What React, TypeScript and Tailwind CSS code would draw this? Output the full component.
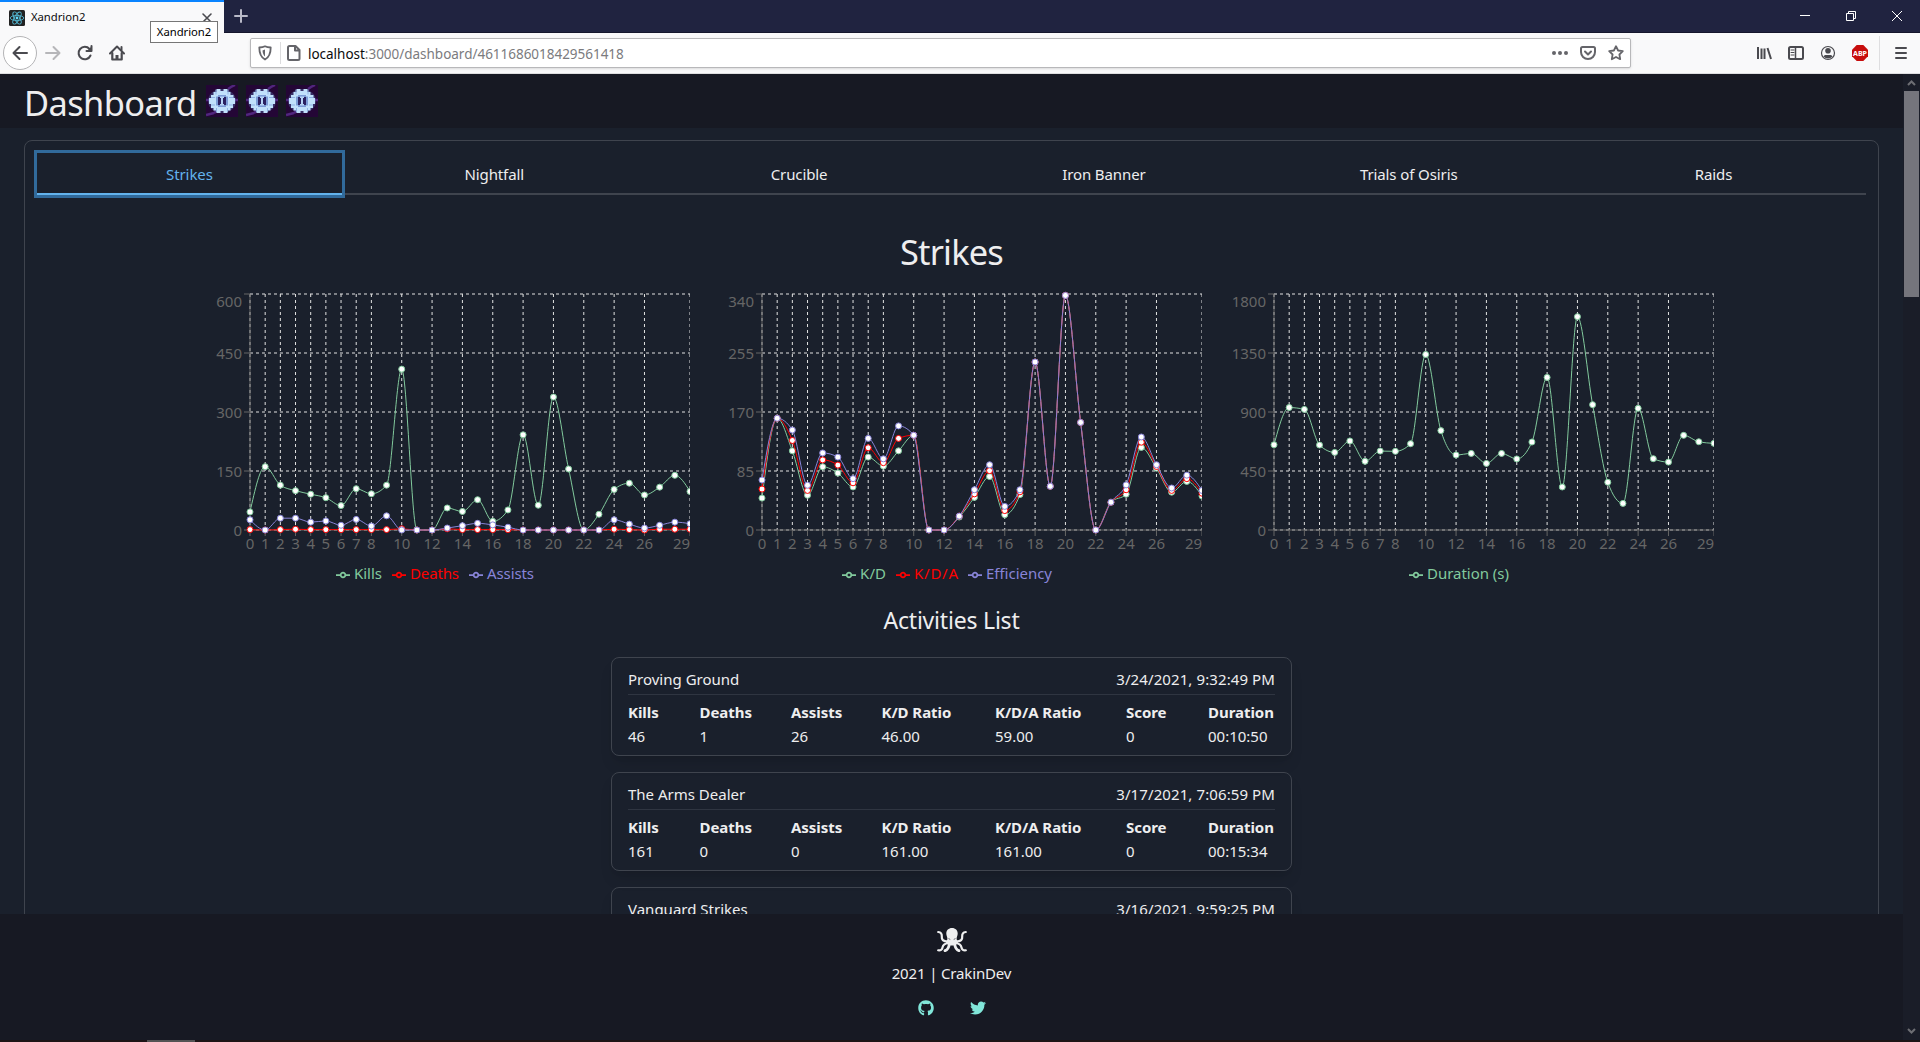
import React from 'react';
import { FaGithub, FaTwitter } from 'react-icons/fa';

type Series = { name: string; color: string; values: number[] };
type ChartData = { max: number; series: Series[]; legendWidths: number[] };

const GREEN = '#82ca9d';
const RED = '#ff0000';
const PURPLE = '#8884d8';

const charts: ChartData[] = [
  {
    max: 600,
    legendWidths: [28, 49, 47],
    series: [
      { name: 'Kills', color: GREEN, values: [46, 161, 114, 100, 91, 82, 62, 105, 92, 114, 409, 0, 0, 56, 47, 77, 22, 51, 242, 63, 338, 155, 0, 40, 103, 119, 89, 109, 139, 98] },
      { name: 'Deaths', color: RED, values: [1, 0, 1, 2, 1, 1, 1, 1, 1, 1, 3, 0, 0, 3, 1, 1, 1, 1, 0, 0, 0, 0, 0, 0, 2, 1, 0, 2, 2, 2] },
      { name: 'Assists', color: PURPLE, values: [26, 0, 30, 30, 20, 23, 12, 27, 10, 36, 0, 0, 0, 5, 11, 17, 13, 7, 0, 0, 0, 0, 0, 0, 26, 15, 5, 12, 20, 16] },
    ],
  },
  {
    max: 340,
    legendWidths: [26, 44, 66],
    series: [
      { name: 'K/D', color: GREEN, values: [46, 161, 114, 50, 91, 82, 62, 105, 92, 114, 136.5, 0, 0, 18.7, 47, 77, 22, 51, 242, 63, 338, 155, 0, 40, 51.5, 119, 89, 54.5, 70, 49] },
      { name: 'K/D/A', color: RED, values: [59, 161, 129, 57, 101, 93.5, 68, 118.5, 97, 132, 136.5, 0, 0, 20, 52, 85.5, 28, 55, 242, 63, 338, 155, 0, 40, 58, 126.5, 91.5, 57, 74, 53] },
      { name: 'Efficiency', color: PURPLE, values: [72, 161, 144, 64.5, 111, 105, 74, 132, 102.5, 150, 136.5, 0, 0, 20, 58, 94, 34, 58, 242, 63, 338, 155, 0, 40, 65, 134, 94, 60.5, 79, 57] },
    ],
  },
  {
    max: 1800,
    legendWidths: [82],
    series: [
      { name: 'Duration (s)', color: GREEN, values: [650, 934, 920, 648, 592, 679, 524, 602, 600, 658, 1339, 758, 572, 584, 508, 584, 542, 671, 1164, 328, 1627, 956, 364, 203, 928, 544, 518, 722, 673, 661] },
    ],
  },
];

const X_TICKS = [0, 1, 2, 3, 4, 5, 6, 7, 8, 10, 12, 14, 16, 18, 20, 22, 24, 26, 29];
const LEFT = 60;
const TOP = 5;
const PLOT_W = 440;
const PLOT_H = 236;

const xAt = (i: number) => LEFT + (i * PLOT_W) / 29;

/* Monotone cubic interpolation through the points. */
function monotonePath(pts: [number, number][]): string {
  const n = pts.length;
  const h: number[] = [];
  const s: number[] = [];
  for (let i = 0; i < n - 1; i++) {
    h.push(pts[i + 1][0] - pts[i][0]);
    s.push((pts[i + 1][1] - pts[i][1]) / h[i]);
  }
  const t: number[] = new Array(n).fill(0);
  for (let i = 1; i < n - 1; i++) {
    const p = (s[i - 1] * h[i] + s[i] * h[i - 1]) / (h[i - 1] + h[i]);
    t[i] = (Math.sign(s[i - 1]) + Math.sign(s[i])) * Math.min(Math.abs(s[i - 1]), Math.abs(s[i]), 0.5 * Math.abs(p)) || 0;
  }
  t[0] = (3 * s[0] - t[1]) / 2;
  t[n - 1] = (3 * s[n - 2] - t[n - 2]) / 2;
  let d = `M${pts[0][0]},${pts[0][1]}`;
  for (let i = 0; i < n - 1; i++) {
    const dx = h[i] / 3;
    d += `C${pts[i][0] + dx},${pts[i][1] + dx * t[i]},${pts[i + 1][0] - dx},${pts[i + 1][1] - dx * t[i + 1]},${pts[i + 1][0]},${pts[i + 1][1]}`;
  }
  return d;
}

function Chart({ data }: { data: ChartData }) {
  const yAt = (v: number) => TOP + PLOT_H * (1 - v / data.max);
  const yTicks = [0, 1, 2, 3, 4].map((k) => (data.max * k) / 4);
  return (
    <div className="w-[500px]">
      <svg width="500" height="271" className="block overflow-hidden text-[15px]">
        <g stroke="#e2e2e2" strokeDasharray="3 3">
          {yTicks.map((v) => (
            <line key={v} x1={LEFT} x2={LEFT + PLOT_W} y1={yAt(v)} y2={yAt(v)} />
          ))}
          {X_TICKS.map((i) => (
            <line key={i} x1={xAt(i)} x2={xAt(i)} y1={TOP} y2={TOP + PLOT_H} />
          ))}
        </g>
        <g stroke="#666">
          <line x1={LEFT} x2={LEFT + PLOT_W} y1={TOP + PLOT_H} y2={TOP + PLOT_H} />
          <line x1={LEFT} x2={LEFT} y1={TOP} y2={TOP + PLOT_H} />
          {yTicks.map((v) => (
            <line key={v} x1={LEFT - 6} x2={LEFT} y1={yAt(v)} y2={yAt(v)} />
          ))}
          {X_TICKS.map((i) => (
            <line key={i} x1={xAt(i)} x2={xAt(i)} y1={TOP + PLOT_H} y2={TOP + PLOT_H + 6} />
          ))}
        </g>
        <g fill="#666" textAnchor="end">
          {yTicks.map((v) => (
            <text key={v} x={LEFT - 8} y={(v === data.max ? 12.3 : yAt(v)) + 5.5}>
              {v}
            </text>
          ))}
        </g>
        <g fill="#666" textAnchor="middle">
          {X_TICKS.map((i) => (
            <text key={i} x={i === 29 ? 491.5 : xAt(i)} y={260}>
              {i}
            </text>
          ))}
        </g>
        {data.series.map((s) => {
          const pts = s.values.map((v, i) => [xAt(i), yAt(v)] as [number, number]);
          return (
            <g key={s.name} stroke={s.color}>
              <path d={monotonePath(pts)} fill="none" />
              {pts.map(([x, y], i) => (
                <circle key={i} cx={x} cy={y} r="3" fill="#fff" />
              ))}
            </g>
          );
        })}
      </svg>
      <div className="flex h-[26px] items-center justify-center">
        {data.series.map((s, i) => (
          <div key={s.name} className="mr-[10px] flex items-center" style={{ color: s.color }}>
            <svg width="14" height="14" viewBox="0 0 32 32" className="mt-[3px] mr-1" fill="none" stroke="currentColor" strokeWidth="4">
              <path d="M0,16h10.67A5.33,5.33,0,1,1,21.33,16H32M21.33,16A5.33,5.33,0,1,1,10.67,16" />
            </svg>
            <svg width={data.legendWidths[i]} height="24" className="block overflow-visible text-[15px]">
              <text x="0" y="17.500" fill="currentColor" textLength={data.legendWidths[i]}>
                {s.name}
              </text>
            </svg>
          </div>
        ))}
      </div>
    </div>
  );
}

const COLUMNS = ['Kills', 'Deaths', 'Assists', 'K/D Ratio', 'K/D/A Ratio', 'Score', 'Duration'];

const activities = [
  { name: 'Proving Ground', date: '3/24/2021, 9:32:49 PM', stats: ['46', '1', '26', '46.00', '59.00', '0', '00:10:50'] },
  { name: 'The Arms Dealer', date: '3/17/2021, 7:06:59 PM', stats: ['161', '0', '0', '161.00', '161.00', '0', '00:15:34'] },
  { name: 'Vanguard Strikes', date: '3/16/2021, 9:59:25 PM', stats: ['114', '1', '30', '114.00', '129.00', '0', '00:15:20'] },
];

function ActivityCard({ a }: { a: (typeof activities)[number] }) {
  return (
    <div className="mb-4 h-[99px] w-[681px] shrink-0 rounded-lg border border-[#3f444e] px-4 pt-[9px] shadow-lg">
      <div className="flex h-[28px] justify-between border-b border-[#2f3541] text-[15px] leading-6">
        <span>{a.name}</span>
        <span className="tracking-[0.1px]">{a.date}</span>
      </div>
      <div className="grid grid-cols-[71.5px_91.5px_90.5px_113.500px_131px_82px_auto] pt-[5px] text-[15px] leading-6 whitespace-nowrap">
        {COLUMNS.map((c) => (
          <span key={c} className="text-[15px] font-bold tracking-[-0.05px]">{c}</span>
        ))}
        {a.stats.map((v, i) => (
          <span key={i}>{v}</span>
        ))}
      </div>
    </div>
  );
}

/* Pixel-art emblem shown next to the page title. */
function Emblem() {
  return (
    <svg width="32" height="32" viewBox="0 0 32 32" className="block">
      <rect width="32" height="32" fill="#240636" />
      <path d="M22 4l3-2 4-2M0 30l8-2M8 28l3-2M0 15h3M29 15h3" stroke="#51267e" strokeWidth="2.500" fill="none" />
      <ellipse cx="16" cy="16" rx="14" ry="12" fill="#5f7fc4" opacity=".35" />
      <path d="M10.500 4h4v2h3V4h4v3h3v3h3v3h1.500v6H27v4h-2.500v2.500h-3V28h-4v-2h-3v2h-4v-2.500h-3V23H5v-4H3v-6h2v-3h2.500V7h3z" fill="#c0e0fb" />
      <path d="M10 4.500v5M22 4.500v5M5 12.500h4M23 12.500h4M5 20h4M23 20h4M10.500 23v4M21.500 23v4" stroke="#8fb2e4" strokeWidth="1" fill="none" />
      <path d="M12 10h8v1.500h2v9h-2V22h-8v-1.500h-2v-9h2z" fill="#7c9bd6" />
      <path d="M12 12h8v8h-8z" fill="#2a2060" />
      <path d="M15 12h2v8h-2zM14 11.500h4V13h-4zM14 19h4v1.500h-4z" fill="#b5d3f5" />
    </svg>
  );
}

function Octopus() {
  return (
    <svg width="30" height="24" viewBox="0 0 30 24" className="block">
      <path d="M15 0c3.400 0 5.700 2.300 5.700 5.400 0 2-1.100 3.400-1.100 5.300 0 1.300 1.400 2.300 1.400 3.600 0 1.500-2.800 3.200-6 3.200s-6-1.700-6-3.200c0-1.300 1.400-2.300 1.400-3.600 0-1.900-1.100-3.300-1.100-5.300C9.300 2.300 11.600 0 15 0z" fill="currentColor" />
      <g fill="none" stroke="currentColor" strokeWidth="2.200" strokeLinecap="round">
        <path d="M10.500 13.500C6 13.500 4.500 11.500 4.800 8.500 5 6 4.500 4.300 1.200 4" />
        <path d="M19.500 13.500c4.500 0 6-2 5.700-5C25 6 25.500 4.300 28.800 4" />
        <path d="M11 15c-3.500.5-5 2-5.500 4.500C5.200 21.500 3.500 22.800 1.200 22.300" />
        <path d="M19 15c3.500.5 5 2 5.500 4.500.3 2 2 3.300 4.300 2.800" />
        <path d="M12.500 15.500c-.5 3-1.500 6.500-4.500 7.200" strokeWidth="2.800" />
        <path d="M17.500 15.500c.5 3 1.500 6.500 4.500 7.200" strokeWidth="2.800" />
      </g>
      <path d="M11.500 10.500l1.800 1M18.500 10.500l-1.800 1" stroke="#171923" strokeWidth="1" opacity=".6" />
    </svg>
  );
}

function ReactFavicon() {
  return (
    <svg width="16" height="16" viewBox="0 0 16 16" className="block">
      <rect width="16" height="16" rx="1.500" fill="#222" />
      <g fill="none" stroke="#53b5cf" strokeWidth=".9">
        <ellipse cx="8" cy="8" rx="6.800" ry="2.600" />
        <ellipse cx="8" cy="8" rx="6.800" ry="2.600" transform="rotate(60 8 8)" />
        <ellipse cx="8" cy="8" rx="6.800" ry="2.600" transform="rotate(120 8 8)" />
      </g>
      <circle cx="8" cy="8" r="1.400" fill="#61dafb" />
    </svg>
  );
}

function Icon({ children, size = 16, className = '' }: { children: React.ReactNode; size?: number; className?: string }) {
  return (
    <svg width={size} height={size} viewBox="0 0 16 16" fill="none" stroke="currentColor" strokeWidth="2" strokeLinecap="round" strokeLinejoin="round" className={`block shrink-0 ${className}`}>
      {children}
    </svg>
  );
}

function TitleBar() {
  return (
    <div className="flex h-[33px] border-b border-[#15162c] bg-[#202340]">
      <div className="relative flex h-[33px] w-[224px] items-center border-t-2 border-[#0a84ff] bg-[#f9f9fa] pl-[9px] text-[#0c0c0d]">
        <ReactFavicon />
        <span className="ml-1.5 text-[11.300px] tracking-[-0.05px]">Xandrion2</span>
        <Icon className="mr-[9px] ml-auto text-[#4a4a4f]">
          <path d="M4 4l8 8M12 4l-8 8" strokeWidth="1.600" />
        </Icon>
        <div className="absolute top-[19px] left-[150px] z-10 flex h-[22px] w-[68px] items-center justify-center border border-[#767676] bg-white pt-px text-[11.300px] tracking-[-0.05px] text-black">
          Xandrion2
        </div>
      </div>
      <Icon className="mt-2 ml-[9px] text-[#b9bac8]">
        <path d="M8 2v12M2 8h12" />
      </Icon>
      <div className="ml-auto flex h-8 items-center gap-9 pr-[18px] text-white">
        <svg width="10" height="10" className="block"><path d="M0 4.500h10" stroke="currentColor" /></svg>
        <svg width="10" height="10" className="block" fill="none" stroke="currentColor"><path d="M.5 2.500h7v7h-7zM2.500 2.500v-2h7v7h-2" /></svg>
        <svg width="10" height="10" className="block"><path d="M0 0l10 10M10 0L0 10" stroke="currentColor" /></svg>
      </div>
    </div>
  );
}

function Toolbar() {
  return (
    <div className="flex h-[41px] items-center border-b border-[#dedee0] bg-[#f9f9fa] pl-[3px] text-[#4a4a4f]">
      <div className="flex size-[34px] items-center justify-center rounded-full border border-[#b4b4b6] bg-white">
        <Icon><path d="M15 8H2M7.500 2L1.500 8l6 6" /></Icon>
      </div>
      <Icon className="ml-2 text-[#b6b6b9]"><path d="M1 8h13M8.500 2l6 6-6 6" /></Icon>
      <Icon className="ml-4"><path d="M13.500 10.500A6.200 6.200 0 1 1 12.500 4M14.500 1v5H9.500" /><path d="M14.500 1.500v4.500H10z" fill="currentColor" stroke="none" /></Icon>
      <Icon className="ml-4"><path d="M1 8.500l7-7 7 7" /><path d="M3.300 8v6.500h9.400V8" strokeWidth="2.200" /><path d="M8 14.500v-4.500" strokeWidth="3" strokeLinecap="butt" /><path d="M12.500 5V2" /></Icon>
      <div className="ml-[125px] flex h-[30px] w-[1381px] items-center rounded-[2px] border border-[#b8b8ba] bg-white pr-[6px] pl-[6px] shadow-sm">
        <Icon className="text-[#65656a]"><path d="M8 1.300c1.700.9 3.600 1.200 5.700 1.200 0 5.500-1 9.500-5.700 12-4.700-2.500-5.700-6.500-5.700-12 2.100 0 4-.3 5.700-1.200z" strokeWidth="1.800" /><path d="M8 4.500v7c-1.500-1.300-2.400-3.300-2.500-6z" fill="currentColor" stroke="none" /></Icon>
        <div className="ml-[7px] h-[22px] w-px bg-[#dcdcde]" />
        <Icon className="ml-[5px] text-[#65656a]"><path d="M3.500 1h6l4 4v8.500a1.500 1.500 0 0 1-1.500 1.500H3.500A1.500 1.500 0 0 1 2 13.500v-11A1.500 1.500 0 0 1 3.500 1zM9 1.500v4h4" /></Icon>
        <div className="mt-[2px] ml-[6px] text-[13.500px] tracking-[-0.02px] text-[#7b7b7e]"><span className="text-[#0c0c0d]">localhost</span>:3000/dashboard/4611686018429561418</div>
        <div className="ml-auto flex gap-3 text-[#65656a]">
          <Icon><g fill="currentColor" stroke="none"><circle cx="2" cy="8" r="2" /><circle cx="8" cy="8" r="2" /><circle cx="14" cy="8" r="2" /></g></Icon>
          <Icon><path d="M2.500 2h11a1.500 1.500 0 0 1 1.500 1.500V7A7 7 0 0 1 1 7V3.500A1.500 1.500 0 0 1 2.500 2z" /><path d="M5 6.500l3 3 3-3" /></Icon>
          <Icon><path d="M8 1.200l2.100 4.300 4.700.7-3.400 3.300.8 4.700L8 12l-4.200 2.200.8-4.700L1.200 6.200l4.700-.7z" strokeWidth="1.800" /></Icon>
        </div>
      </div>
      <div className="ml-auto flex h-full items-center gap-4 pr-[11px]">
        <Icon><path d="M2 2v12M5.500 3.500V14M8.500 3.500V14M11.500 3l3.500 11" strokeLinecap="butt" /></Icon>
        <Icon><rect x="1" y="2" width="14" height="12" rx="1.500" /><path d="M7.500 2v12" strokeWidth="1.500" /><path d="M3 5h3M3 7.500h3M3 10h3" strokeWidth="1" /></Icon>
        <Icon><circle cx="8" cy="8" r="6.500" strokeWidth="1.200" /><circle cx="8" cy="5.800" r="2.800" fill="currentColor" stroke="none" /><path d="M3.500 11.500c1-2 2.500-1.500 4.500-1.500s3.500-.5 4.500 1.500c-2.500 2.500-6.500 2.500-9 0z" fill="currentColor" stroke="none" /></Icon>
        <svg width="16" height="16" viewBox="0 0 16 16" className="block">
          <path d="M4.700 0h6.600L16 4.700v6.600L11.300 16H4.700L0 11.300V4.700z" fill="#c70d0d" />
          <text x="8" y="10.700" textAnchor="middle" fill="#fff" fontSize="7.500" fontWeight="bold" textLength="14" lengthAdjust="spacingAndGlyphs">ABP</text>
        </svg>
        <div className="-ml-[5px] h-[34px] w-px bg-[#dedee0]" />
        <Icon className="-ml-[3px]"><path d="M3 3h10M3 8h10M3 13h10" /></Icon>
      </div>
    </div>
  );
}

const TABS = ['Strikes', 'Nightfall', 'Crucible', 'Iron Banner', 'Trials of Osiris', 'Raids'];

export default function App() {
  return (
    <div className="flex h-[1042px] w-[1920px] flex-col overflow-hidden bg-[#1a202c] font-['Noto_Sans','Open_Sans',sans-serif] text-[#eeeeef]">
      <TitleBar />
      <Toolbar />
      <div className="flex min-h-0 flex-1">
        <div className="flex w-[1903px] flex-col">
          <header className="flex h-[54px] shrink-0 items-center bg-[#171923] pl-6">
            <h1 className="mt-[3px] w-[174px] text-[34.400px] leading-[54px] tracking-[-0.6px] whitespace-nowrap">Dashboard</h1>
            <div className="ml-2 flex gap-2">
              <Emblem />
              <Emblem />
              <Emblem />
            </div>
          </header>
          <main className="min-h-0 flex-1 overflow-hidden px-6 pt-3">
            <div className="flex h-[900px] flex-col items-center rounded-lg border border-[#3f444e] px-3 pt-3">
              <div className="flex h-[42px] w-[1829px] shrink-0 border-b-2 border-[#3f444e] text-[15px] tracking-[-0.1px]">
                {TABS.map((t, i) => (
                  <div
                    key={t}
                    className={
                      i === 0
                        ? 'flex h-[42px] flex-1 items-center justify-center border-b-2 border-[#63b3ed] pt-[3px] text-[#63b3ed] shadow-[0_0_0_3px_#316a9b]'
                        : 'flex h-[40px] flex-1 items-center justify-center pt-[3px]'
                    }
                  >
                    {t}
                  </div>
                ))}
              </div>
              <h2 className="mt-[35px] h-[44px] text-[34.400px] leading-[44px] tracking-[-0.8px]">Strikes</h2>
              <div className="mt-[15px] flex shrink-0 gap-3">
                {charts.map((c) => (
                  <Chart key={c.max} data={c} />
                ))}
              </div>
              <h3 className="mt-[17px] mb-[20px] h-[34px] text-[23px] leading-[34px] tracking-[-0.2px]">Activities List</h3>
              {activities.map((a) => (
                <ActivityCard key={a.name} a={a} />
              ))}
            </div>
          </main>
          <footer className="flex h-[126px] shrink-0 flex-col items-center bg-[#171923] pt-[14px]">
            <Octopus />
            <div className="mt-[9px] text-[15px] leading-6 tracking-[-0.15px]">2021 | CrakinDev</div>
            <div className="mt-[15px] flex gap-9 text-[#81e6d9]">
              <FaGithub size={16} />
              <FaTwitter size={16} />
            </div>
          </footer>
        </div>
        <div className="flex w-[17px] flex-col items-center bg-[#1a1d28]">
          <svg width="17" height="17" className="block"><path d="M5 11l3.500-3.500L12 11" fill="none" stroke="#6d6e73" strokeWidth="2" /></svg>
          <div className="h-[206px] w-[15px] bg-[#75757c]" />
          <svg width="17" height="17" className="mt-auto block"><path d="M5 6l3.500 3.500L12 6" fill="none" stroke="#6d6e73" strokeWidth="2" /></svg>
        </div>
      </div>
      <div className="h-[2px] shrink-0 bg-[#1d1416]">
        <div className="ml-[147px] h-full w-12 bg-[#545354]" />
      </div>
    </div>
  );
}
